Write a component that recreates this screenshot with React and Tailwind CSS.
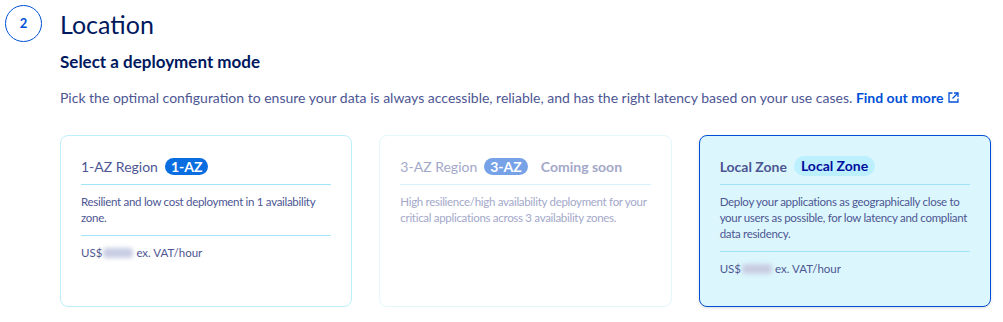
import React from 'react';

const cards = [
  {
    title: '1-AZ Region',
    badge: '1-AZ',
    text: 'Resilient and low cost deployment in 1 availability zone.',
    price: true,
    state: 'default',
  },
  {
    title: '3-AZ Region',
    badge: '3-AZ',
    soon: 'Coming soon',
    text: 'High resilience/high availability deployment for your critical applications across 3 availability zones.',
    price: false,
    state: 'disabled',
  },
  {
    title: 'Local Zone',
    badge: 'Local Zone',
    text: 'Deploy your applications as geographically close to your users as possible, for low latency and compliant data residency.',
    price: true,
    state: 'selected',
  },
];

const ExternalIcon = () => (
  <svg width="11" height="11" viewBox="0 0 11 11" fill="none" stroke="currentColor" strokeWidth="1.3" className="inline-block ml-[5px] -mt-[3px]">
    <path d="M4.5 1H1v9h9V6.5" />
    <path d="M6 1h4v4" />
    <path d="M10 1L4.5 6.5" />
  </svg>
);

const Card = ({ card }) => {
  const disabled = card.state === 'disabled';
  const selected = card.state === 'selected';
  const box = selected
    ? 'bg-[#dcf6fd] border-[#0050d7] shadow-[0_1px_3px_rgba(0,0,0,0.15)]'
    : disabled
      ? 'bg-white border-[#e3f7fd]'
      : 'bg-white border-[#bdeffb]';
  const titleColor = disabled ? 'text-[#a3a8c9]' : 'text-[#4d5693]';
  const badge = selected
    ? 'bg-[#bdf0fe] text-[#000e9c] font-bold h-[20px] leading-[20px] px-[7px]'
    : disabled
      ? 'bg-[#78a2e8] text-white font-bold h-[17px] leading-[17px] px-[6px]'
      : 'bg-[#0a6ee1] text-white font-bold h-[17px] leading-[17px] px-[6px]';
  const line = disabled ? 'border-[#d7f3fb]' : 'border-[#9fe5f7]';

  return (
    <div className={`rounded-lg border px-5 pt-[19px] ${box}`}>
      <div className="flex items-center h-[22px]">
        <span className={`text-[14px] ${selected ? 'font-bold' : ''} ${titleColor}`}>{card.title}</span>
        <span className={`ml-[7px] rounded-full text-[14px] ${badge}`}>{card.badge}</span>
        {card.soon && <span className="ml-[13px] text-[14px] font-bold text-[#a3a8c9]">{card.soon}</span>}
      </div>
      <div className={`mt-[7px] border-t ${line}`} />
      <p className={`mt-[9px] text-[11.5px] tracking-[-0.3px] leading-[16px] ${disabled ? 'text-[#a3a8c9]' : 'text-[#4d5693]'}`}>{card.text}</p>
      {card.price && (
        <>
          <div className={`mt-[9px] border-t ${line}`} />
          <p className="mt-[9px] text-[11.5px] leading-[16px] text-[#4d5693] flex items-center">
            US$
            <span className="inline-block w-[30px] h-[10px] mx-[1px] rounded bg-[#c9cde3] blur-[2px]" />
            <span className="ml-[2px]">ex. VAT/hour</span>
          </p>
        </>
      )}
    </div>
  );
};

export default function App() {
  return (
    <div className="bg-white w-[1003px] h-[322px] font-['Lato','Noto_Sans',sans-serif] relative">
      <div className="flex pt-[5px] pl-[5px]">
        <div className="w-[37px] h-[37px] rounded-full border border-[#0050d7] flex items-center justify-center text-[#0050d7] text-[13px] font-bold shrink-0">
          2
        </div>
        <div className="ml-[18px] flex-1 pr-[12px]">
          <h1 className="text-[25px] leading-[36px] text-[#00185e] mt-[1px]">Location</h1>
          <h2 className="mt-[8px] text-[17px] font-bold text-[#00185e] leading-[24px]">Select a deployment mode</h2>
          <p className="mt-[14px] text-[14px] leading-[20px] text-[#4d5693]">
            Pick the optimal configuration to ensure your data is always accessible, reliable, and has the right latency based on your use cases.{' '}
            <a className="text-[#0050d7] font-bold">Find out more<ExternalIcon /></a>
          </p>
          <div className="mt-[27px] grid grid-cols-3 gap-[27px] h-[172px] w-[931px]">
            {cards.map((c) => (
              <Card key={c.title} card={c} />
            ))}
          </div>
        </div>
      </div>
    </div>
  );
}
